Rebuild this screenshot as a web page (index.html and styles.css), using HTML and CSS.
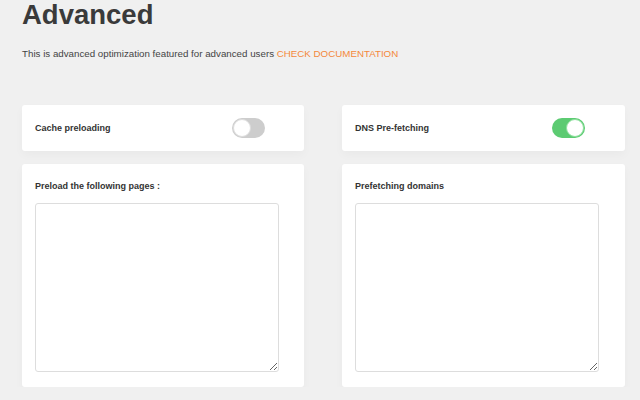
FILE: index.html
```html
<!DOCTYPE html>
<html lang="en">
<head>
    <meta charset="UTF-8">
    <meta name="viewport" content="width=device-width, initial-scale=1.0">
    <title>Advanced</title>
    <link rel="stylesheet" href="styles.css">
</head>
<body>
    <div class="page">
        <h1 class="title">Advanced</h1>
        <p class="intro">This is advanced optimization featured for advanced users <a href="#" class="doc-link">CHECK DOCUMENTATION</a></p>

        <div class="grid">
            <div class="card card-row">
                <span class="label">Cache preloading</span>
                <label class="switch">
                    <input type="checkbox">
                    <span class="slider"></span>
                </label>
            </div>
            <div class="card card-row">
                <span class="label">DNS Pre-fetching</span>
                <label class="switch">
                    <input type="checkbox" checked>
                    <span class="slider"></span>
                </label>
            </div>
            <div class="card card-area">
                <label class="label" for="pages">Preload the following pages :</label>
                <textarea id="pages" class="field"></textarea>
            </div>
            <div class="card card-area">
                <label class="label" for="domains">Prefetching domains</label>
                <textarea id="domains" class="field"></textarea>
            </div>
        </div>
    </div>
</body>
</html>
```

FILE: styles.css
```css
body {
    margin: 0;
    padding: 0;
    background-color: #f0f0f0;
    font-family: "Liberation Sans", Arial, sans-serif;
    color: #333;
}
.page {
    padding: 0 15px 0 22px;
}
.title {
    margin: 0;
    font-size: 27.5px;
    line-height: 29px;
    color: #3a3a3a;
}
.intro {
    margin: 19px 0 0;
    font-size: 9.75px;
    line-height: 12px;
    color: #444;
}
.doc-link {
    color: #f4883a;
    text-decoration: none;
}
.grid {
    display: grid;
    grid-template-columns: 282px 283px;
    column-gap: 38px;
    row-gap: 13px;
    margin-top: 45px;
}
.card {
    background-color: #fff;
    border-radius: 3px;
    box-shadow: 0 4px 10px rgba(0, 0, 0, 0.03);
}
.card-row {
    height: 46px;
    padding: 0 13px;
    display: flex;
    align-items: center;
}
.card-row .label {
    width: 197px;
}
.label {
    font-size: 9px;
    font-weight: bold;
    color: #333;
}
.switch {
    position: relative;
    display: inline-block;
    width: 33px;
    height: 20px;
}
.switch input {
    display: none;
}
.slider {
    position: absolute;
    inset: 0;
    background-color: #cdcdcd;
    border-radius: 10px;
}
.slider::before {
    content: "";
    position: absolute;
    left: 1px;
    top: 1px;
    width: 16px;
    height: 16px;
    border-radius: 50%;
    background-color: #fff;
    border: 1px solid #ddd;
}
.switch input:checked + .slider {
    background-color: #5ccb72;
}
.switch input:checked + .slider::before {
    left: 14px;
    border-color: #8ee09e;
}
.card-area {
    padding: 16px 13px 15px;
    display: flex;
    flex-direction: column;
}
.card-area .label {
    line-height: 12px;
    margin-bottom: 11px;
}
.field {
    width: 244px;
    height: 169px;
    box-sizing: border-box;
    border: 1px solid #ddd;
    border-radius: 3px;
    padding: 4px;
    font-family: inherit;
}
```
